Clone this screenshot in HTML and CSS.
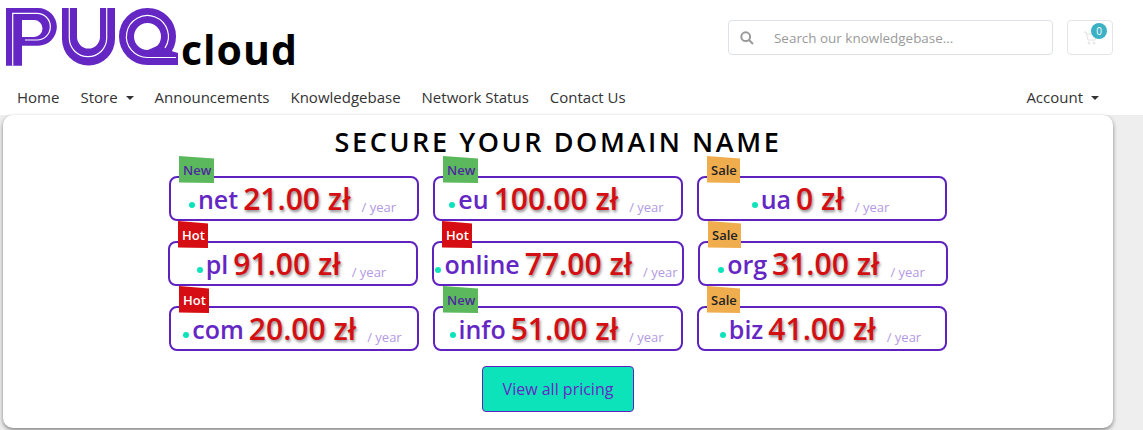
FILE: index.html
```html
<!DOCTYPE html>
<html lang="en">
<head>
<meta charset="utf-8">
<title>PUQcloud</title>
<link rel="stylesheet" href="styles.css">
</head>
<body>
<header class="topbar">
  <div class="brand">
    <svg class="logo" width="180" height="70" viewBox="0 0 180 70" aria-hidden="true">
      <path class="logo-fill" fill-rule="evenodd" d="M6 8H38A18.85 18.85 0 0 1 38 45.7H22V65.7H6ZM22 20V37H34A8.5 8.5 0 0 0 34 20Z"/>
      <path class="logo-fill" d="M62 8H77V37A11.5 11.5 0 0 0 100 37V8H115V39A26.5 26.5 0 0 1 62 39Z"/>
      <circle class="logo-ring" cx="147.5" cy="36.5" r="21"/>
      <path class="logo-fill" d="M148 65H178V53L168 50L157 46L148 50Z"/>
      <path class="logo-line" d="M12.7 65.7V13.3H37A13.35 13.35 0 0 1 37 40H25"/>
      <path class="logo-line" d="M69.3 8V38A18.7 18.7 0 0 0 106.7 38V8"/>
      <path class="logo-line" d="M165 48A21 21 0 1 0 148 57.5H176"/>
    </svg>
    <span class="brand-word">cloud</span>
  </div>
  <div class="tools">
    <div class="search">
      <svg class="search-icon" width="14" height="14" viewBox="0 0 14 14" aria-hidden="true"><circle cx="5.7" cy="5.7" r="4.4"/><path d="M9 9l4 4"/></svg>
      <span class="search-text">Search our knowledgebase...</span>
    </div>
    <div class="cart">
      <svg class="cart-icon" width="15" height="14" viewBox="0 0 15 14" aria-hidden="true"><path d="M1 1h2l2 8h7l2-6H4"/><circle cx="6" cy="12" r="1"/><circle cx="11" cy="12" r="1"/></svg>
      <span class="cart-badge">0</span>
    </div>
  </div>
</header>
<nav class="nav">
  <a>Home</a>
  <a class="drop">Store</a>
  <a>Announcements</a>
  <a>Knowledgebase</a>
  <a>Network Status</a>
  <a>Contact Us</a>
  <a class="drop account">Account</a>
</nav>
<main class="card">
  <h1 class="title">SECURE YOUR DOMAIN NAME</h1>
  <div class="grid">
    <div class="tile"><span class="tag tag-new">New</span><span class="tld">net</span><span class="price">21.00 zł</span><span class="per">/ year</span></div>
    <div class="tile"><span class="tag tag-new">New</span><span class="tld">eu</span><span class="price">100.00 zł</span><span class="per">/ year</span></div>
    <div class="tile"><span class="tag tag-sale">Sale</span><span class="tld">ua</span><span class="price">0 zł</span><span class="per">/ year</span></div>
    <div class="tile nudge-left"><span class="tag tag-hot">Hot</span><span class="tld">pl</span><span class="price">91.00 zł</span><span class="per">/ year</span></div>
    <div class="tile nudge-wide"><span class="tag tag-hot">Hot</span><span class="tld">online</span><span class="price">77.00 zł</span><span class="per">/ year</span></div>
    <div class="tile nudge-right"><span class="tag tag-sale">Sale</span><span class="tld">org</span><span class="price">31.00 zł</span><span class="per">/ year</span></div>
    <div class="tile"><span class="tag tag-hot">Hot</span><span class="tld">com</span><span class="price">20.00 zł</span><span class="per">/ year</span></div>
    <div class="tile"><span class="tag tag-new">New</span><span class="tld">info</span><span class="price">51.00 zł</span><span class="per">/ year</span></div>
    <div class="tile"><span class="tag tag-sale">Sale</span><span class="tld">biz</span><span class="price">41.00 zł</span><span class="per">/ year</span></div>
  </div>
  <a class="cta">View all pricing</a>
</main>
</body>
</html>
```
FILE: styles.css
```css
* { box-sizing: border-box; }
html, body { margin: 0; height: 430px; overflow: hidden; }
body { background: #eeeeee; font-family: "Open Sans", sans-serif; color: #333; display: flex; flex-direction: column; }
.topbar { background: #fff; height: 80px; display: flex; justify-content: space-between; padding: 0 30px 0 0; }
.brand { display: flex; align-items: flex-start; }
.logo { display: block; }
.logo-fill { fill: #6527c3; }
.logo-ring { fill: none; stroke: #6527c3; stroke-width: 15; }
.logo-line { fill: none; stroke: #fff; stroke-width: 1.2; }
.brand-word { font-size: 41px; font-weight: 700; color: #000; line-height: 50px; margin: 24px 0 0 1px; letter-spacing: 1px; }
.tools { display: flex; gap: 14px; padding-top: 20px; }
.search { width: 325px; height: 35px; border: 1px solid #dee2e6; border-radius: 4px; display: flex; align-items: center; padding-left: 11px; }
.search-icon { fill: none; stroke: #999; stroke-width: 2; }
.search-text { margin-left: 20px; font-size: 13.45px; color: #9a9a9a; }
.cart { width: 46px; height: 35px; border: 1px solid #e3e5e8; border-radius: 4px; position: relative; display: flex; align-items: center; padding-left: 15px; }
.cart-icon { fill: none; stroke: #e2e2e2; stroke-width: 1; }
.cart-badge { position: absolute; top: 2px; left: 23px; width: 16px; height: 16px; border-radius: 50%; background: #3cb0c4; color: #fff; font-size: 10px; line-height: 16px; text-align: center; }
.nav { background: #fff; height: 35px; display: flex; gap: 21px; padding: 5px 44px 0 17px; font-size: 15px; line-height: 24px; color: #333; }
.drop::after { content: ""; display: inline-block; margin-left: 8px; vertical-align: 3px; border-top: 4px solid #333; border-left: 4px solid transparent; border-right: 4px solid transparent; }
.account { margin-left: auto; }
.card { background: #fff; width: 1110px; height: 313px; margin-left: 3px; border-radius: 10px; box-shadow: 0 2px 4px rgba(0,0,0,.45); display: flex; flex-direction: column; align-items: center; }
.title { margin: 8px 0 0; font-size: 27px; line-height: 37px; font-weight: 600; color: #000; letter-spacing: 2.6px; }
.grid { display: grid; grid-template-columns: repeat(3, 250px); column-gap: 14px; row-gap: 20px; margin-top: 16px; }
.tile { position: relative; height: 45px; border: 2px solid #5f22bf; border-radius: 8px; display: flex; justify-content: center; align-items: flex-start; white-space: nowrap; line-height: 40px; padding: 1px 3px 0 0; }
.nudge-left { margin: 0 1px 0 -1px; }
.nudge-wide { margin: 0 -1px 0 -1px; }
.nudge-right { margin: 0 -1px 0 1px; }
.tag { position: absolute; left: 8px; top: -22px; width: 35px; height: 27px; font-size: 13px; line-height: 27px; padding: 1px 0 0 4px; font-weight: 600; clip-path: polygon(0 0, 100% 9%, 100% 100%, 0 98%); }
.tag-new { background: #5cb85c; color: #4c2a9c; }
.tag-hot { background: #d60d12; color: #fff; width: 30px; }
.tag-sale { background: #f0ad4e; color: #222; width: 33px; }
.tld { font-size: 25px; font-weight: 600; color: #6527c3; }
.tld::before { content: ""; display: inline-block; width: 6px; height: 6px; border-radius: 50%; background: #0de3bb; margin-right: 3px; vertical-align: 1px; }
.price { font-size: 30px; font-weight: 600; color: #d40f13; text-shadow: 1px 2px 3px rgba(0,0,0,.45); margin-left: 5px; }
.per { font-size: 13px; color: #b39ae3; margin: 8px 0 0 11px; }
.cta { margin-top: 15px; width: 152px; height: 46px; background: #0de3bb; border: 1px solid #5f22bf; border-radius: 4px; color: #6527c3; font-size: 16px; line-height: 44px; text-align: center; }
```
